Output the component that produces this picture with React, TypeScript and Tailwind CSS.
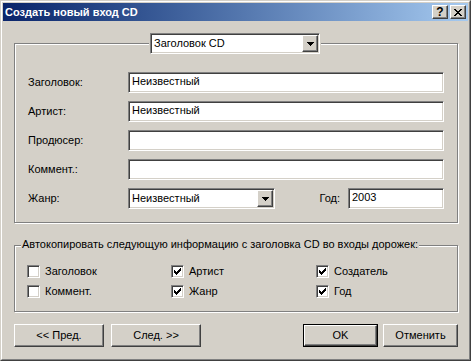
import React from "react";

const sunken =
  "border border-t-[#808080] border-l-[#808080] border-b-white border-r-white shadow-[inset_1px_1px_0_#404040,inset_-1px_-1px_0_#d4d0c8]";
const raised =
  "border border-t-white border-l-white border-b-[#404040] border-r-[#404040] shadow-[inset_-1px_-1px_0_#808080]";
const etched =
  "border border-[#808080] shadow-[inset_1px_1px_0_#fff,1px_1px_0_#fff]";

function Arrow() {
  return (
    <svg width="7" height="4" viewBox="0 0 7 4" shapeRendering="crispEdges">
      <path d="M0 0H7V1H6V2H5V3H4V4H3V3H2V2H1V1H0Z" fill="#000" />
    </svg>
  );
}

function Combo({ text, className }: { text: string; className: string }) {
  return (
    <div className={`relative h-[21px] bg-white ${sunken} ${className}`}>
      <div className="pl-[3px] pt-[3px] whitespace-nowrap">{text}</div>
      <div
        className={`absolute right-px top-px w-[16px] h-[17px] bg-[#d4d0c8] flex items-center justify-center ${raised}`}
      >
        <Arrow />
      </div>
    </div>
  );
}

function TextInput({ value, className }: { value?: string; className: string }) {
  return (
    <div className={`h-[21px] bg-white ${sunken} ${className}`}>
      <div className="pl-[3px] pt-[2px] whitespace-nowrap">{value}</div>
    </div>
  );
}

function Check() {
  return (
    <svg width="7" height="7" viewBox="0 0 7 7" shapeRendering="crispEdges">
      <path
        d="M6 0H7V3H6V4H5V5H4V6H3V7H2V6H1V5H0V2H1V3H2V4H3V3H4V2H5V1H6Z"
        fill="#000"
      />
    </svg>
  );
}

function CheckBox({ label, checked }: { label: string; checked?: boolean }) {
  return (
    <div className="flex items-center h-[13px]">
      <div
        className={`w-[13px] h-[13px] bg-white flex items-center justify-center ${sunken}`}
      >
        {checked && <Check />}
      </div>
      <span className="ml-[5px] whitespace-nowrap">{label}</span>
    </div>
  );
}

function Button({
  label,
  className,
  isDefault,
}: {
  label: string;
  className: string;
  isDefault?: boolean;
}) {
  if (isDefault) {
    return (
      <div className={`h-[23px] border border-black ${className}`}>
        <div className={`h-full flex items-center justify-center ${raised}`}>
          {label}
        </div>
      </div>
    );
  }
  return (
    <div className={`h-[23px] flex items-center justify-center ${raised} ${className}`}>
      {label}
    </div>
  );
}

function TitleButton({ children }: { children: React.ReactNode }) {
  return (
    <div
      className={`w-[16px] h-[14px] bg-[#d4d0c8] flex items-center justify-center ${raised}`}
    >
      {children}
    </div>
  );
}

const rows: { label: string; value?: string }[] = [
  { label: "Заголовок:", value: "Неизвестный" },
  { label: "Артист:", value: "Неизвестный" },
  { label: "Продюсер:" },
  { label: "Коммент.:" },
];

export default function App() {
  return (
    <div className="w-[471px] h-[361px] bg-[#d4d0c8] border border-t-[#d4d0c8] border-l-[#d4d0c8] border-b-[#404040] border-r-[#404040] font-['Liberation_Sans',Arial,sans-serif] text-[11px] leading-[13px] text-black select-none">
      <div className="h-full border border-t-white border-l-white border-b-[#808080] border-r-[#808080] p-px flex flex-col">
        {/* Title bar */}
        <div className="h-[18px] bg-linear-to-r from-[#0a246a] to-[#a6caf0] flex items-center justify-between pl-[2px] pr-[2px]">
          <span className="text-white font-bold whitespace-nowrap">
            Создать новый вход CD
          </span>
          <div className="flex gap-[2px]">
            <TitleButton>
              <span className="font-bold text-[12px] leading-[12px] mt-[-1px]">?</span>
            </TitleButton>
            <TitleButton>
              <svg width="8" height="7" viewBox="0 0 8 7" shapeRendering="crispEdges">
                <path
                  d="M0 0H2V1H3V2H5V1H6V0H8V1H7V2H6V3H5V4H6V5H7V6H8V7H6V6H5V5H3V6H2V7H0V6H1V5H2V4H3V3H2V2H1V1H0Z"
                  fill="#000"
                />
              </svg>
            </TitleButton>
          </div>
        </div>

        <div className="pl-[11px] pt-[22px]">
          {/* Group 1 */}
          <div className={`relative w-[444px] h-[180px] ${etched} pt-[28px] px-[13px]`}>
            <div className="absolute left-[134px] top-[-11px] px-px bg-[#d4d0c8]">
              <Combo text="Заголовок CD" className="w-[170px]" />
            </div>
            <div className="flex flex-col gap-[8px]">
              {rows.map((r) => (
                <div key={r.label} className="flex items-center h-[21px]">
                  <span className="w-[100px] whitespace-nowrap">{r.label}</span>
                  <TextInput value={r.value} className="flex-1" />
                </div>
              ))}
              <div className="flex items-center h-[21px]">
                <span className="w-[100px]">Жанр:</span>
                <Combo text="Неизвестный" className="w-[147px]" />
                <div className="ml-auto flex items-center gap-[8px]">
                  <span>Год:</span>
                  <TextInput value="2003" className="w-[96px]" />
                </div>
              </div>
            </div>
          </div>

          {/* Group 2 */}
          <div className={`relative mt-[22px] w-[444px] h-[67px] ${etched} pt-[19px] pl-[12px]`}>
            <div className="absolute left-[6px] top-[-8px] px-px bg-[#d4d0c8] whitespace-nowrap">
              Автокопировать следующую информацию с заголовка CD во входы дорожек:
            </div>
            <div className="flex flex-col gap-[7px]">
              <div className="flex">
                <div className="w-[144px]">
                  <CheckBox label="Заголовок" />
                </div>
                <div className="w-[145px]">
                  <CheckBox label="Артист" checked />
                </div>
                <CheckBox label="Создатель" checked />
              </div>
              <div className="flex">
                <div className="w-[144px]">
                  <CheckBox label="Коммент." />
                </div>
                <div className="w-[145px]">
                  <CheckBox label="Жанр" checked />
                </div>
                <CheckBox label="Год" checked />
              </div>
            </div>
          </div>

          {/* Buttons */}
          <div className="mt-[12px] w-[444px] flex items-center">
            <Button label="<< Пред." className="w-[90px]" />
            <Button label="След. >>" className="w-[90px] ml-[7px]" />
            <Button label="OK" className="w-[75px] ml-auto" isDefault />
            <Button label="Отменить" className="w-[75px] ml-[5px]" />
          </div>
        </div>
      </div>
    </div>
  );
}
